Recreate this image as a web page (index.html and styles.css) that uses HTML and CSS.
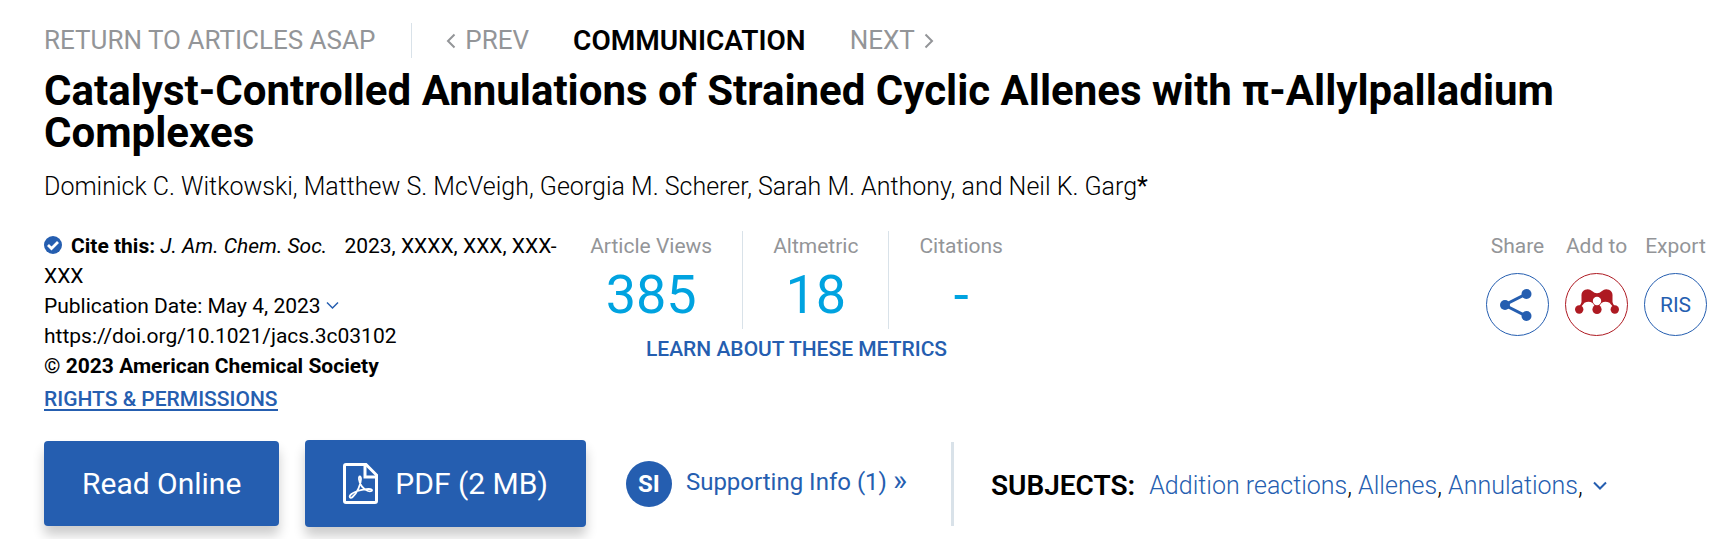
FILE: index.html
```html
<!DOCTYPE html>
<html lang="en">
<head>
<meta charset="utf-8">
<title>Catalyst-Controlled Annulations of Strained Cyclic Allenes</title>
<link rel="stylesheet" href="styles.css">
</head>
<body>
<main class="article">
  <nav class="crumbs">
    <a class="crumb-return" href="#">RETURN TO ARTICLES ASAP</a>
    <a class="crumb-step" href="#"><svg width="10" height="16" viewBox="0 0 10 16"><path d="M8.500 1.500 2 8l6.500 6.500"/></svg>PREV</a>
    <span class="crumb-type">COMMUNICATION</span>
    <a class="crumb-step" href="#">NEXT<svg width="10" height="16" viewBox="0 0 10 16"><path d="M1.500 1.500 8 8l-6.500 6.500"/></svg></a>
  </nav>
  <h1 class="title">Catalyst-Controlled Annulations of Strained Cyclic Allenes with π-Allylpalladium Complexes</h1>
  <p class="authors">Dominick C. Witkowski, Matthew S. McVeigh, Georgia M. Scherer, Sarah M. Anthony, and Neil K. Garg<span class="star">*</span></p>

  <div class="details">
    <div class="cite">
      <p class="cite-line"><svg class="check" width="18" height="18" viewBox="0 0 18 18"><circle cx="9" cy="9" r="9" fill="#255eb0"/><path d="m4 9 3.500 3.500L14 6" fill="none" stroke="#fff" stroke-width="2.800"/></svg><strong>Cite this:</strong> <em>J. Am. Chem. Soc.</em> <span class="cite-ref">2023, XXXX, XXX, XXX-<wbr>XXX</span></p>
      <p class="cite-line">Publication Date: May 4, 2023 <svg class="caret" width="13" height="9" viewBox="0 0 13 9"><path d="m1 1.500 5.500 5.500L12 1.500"/></svg></p>
      <p class="cite-line">https://doi.org/10.1021/jacs.3c03102</p>
      <p class="cite-line"><strong>© 2023 American Chemical Society</strong></p>
      <a class="rights" href="#">RIGHTS &amp; PERMISSIONS</a>
    </div>
    <div class="metrics">
      <dl class="metric-row">
        <div class="metric"><dt>Article Views</dt><dd>385</dd></div>
        <div class="metric"><dt>Altmetric</dt><dd>18</dd></div>
        <div class="metric"><dt>Citations</dt><dd>-</dd></div>
      </dl>
      <a class="learn" href="#">LEARN ABOUT THESE METRICS</a>
    </div>
    <div class="tools">
      <div class="tool"><span id="share">Share</span>
        <button class="round" type="button" aria-labelledby="share"><svg width="36" height="34" viewBox="0 0 36 34" fill="#255eb0"><path d="M26 6 4.500 17 26 28" fill="none" stroke="#255eb0" stroke-width="3"/><circle cx="5" cy="17" r="5"/><circle cx="26.500" cy="6" r="5"/><circle cx="26.500" cy="28" r="5"/></svg></button></div>
      <div class="tool"><span id="addto">Add to</span>
        <button class="round round-red" type="button" aria-labelledby="addto"><svg width="44" height="32" viewBox="0 0 44 32"><g fill="#ae1a22"><path d="M6.500 7A6.200 6.200 0 0 1 17 2q5 4.500 10 0a6.200 6.200 0 0 1 10.500 5v6q.3 2.200 2.500 4.500l-1.500 1q-3-3.500-4-4.700-4.500-2.200-8 .2-1.500 1.500-2.500 4h-4q-1-2.500-2.500-4-3.500-2.400-8-.2l-4 4.700-1.500-1q2.200-2.300 2.500-4.500z"/><circle cx="4.200" cy="20.500" r="4.200"/><circle cx="22" cy="20.500" r="4.600"/><circle cx="39.800" cy="20.500" r="4.200"/></g><circle cx="22" cy="12" r="4.200" fill="#fff"/></svg></button></div>
      <div class="tool"><span id="export">Export</span>
        <button class="round" type="button" aria-describedby="export">RIS</button></div>
    </div>
  </div>

  <div class="actions">
    <button class="btn" type="button">Read Online</button>
    <button class="btn btn-pdf" type="button"><svg width="35" height="41" viewBox="0 0 35 41" fill="none" stroke="#fff"><path d="M3 1.500h20L33.500 12v26q0 1.500-1.500 1.500H3q-1.500 0-1.500-1.500V3Q1.500 1.500 3 1.500z" stroke-width="3"/><path d="M22 2v12h11" stroke-width="3"/><path d="M7 34.500c-1.500-2 3-5 7.500-6.500 6-2 12.500-2.500 14-1.500s-.5 2.500-3.500 1.500c-5-1.500-8.500-7-9-11.500-.4-4 2-4 2-.5 0 5-4 14-8 17.500-1.200 1.200-2.300 1.800-3 1z" stroke-width="1.800"/></svg>PDF (2 MB)</button>
    <a class="support" href="#"><span class="si">SI</span><span class="support-text">Supporting Info (1) <span class="angle">»</span></span></a>
    <div class="subjects"><strong class="subjects-head">SUBJECTS:</strong>
      <ul class="subject-list"><li><a href="#">Addition reactions</a>,</li><li><a href="#">Allenes</a>,</li><li><a href="#">Annulations</a>,</li></ul>
      <button class="more" type="button" aria-label="More subjects"><svg class="caret caret-bold" width="14" height="10" viewBox="0 0 14 10"><path d="m1 1.500 6 6 6-6"/></svg></button>
    </div>
  </div>
</main>
</body>
</html>
```
FILE: styles.css
```css
* { box-sizing: border-box; margin: 0; padding: 0; }
body { background: #fff; color: #000; font: 400 21px/30px Roboto, sans-serif; }
a { color: #255eb0; text-decoration: none; }
button { font: inherit; cursor: pointer; }
strong { font-weight: 700; }
.article { padding: 23px 26px 13px 44px; }

.crumbs { display: flex; align-items: center; font-size: 26px; line-height: 35px; }
.crumbs a { color: #939598; }
.crumb-return { padding-right: 36px; border-right: 1px solid #d9e2e9; }
.crumb-step { display: flex; align-items: center; gap: 9px; }
.crumb-step svg { fill: none; stroke: #939598; stroke-width: 2; }
.crumb-return + .crumb-step { margin-left: 34px; }
.crumb-type { margin: 0 44px; font-size: 28px; font-weight: 600; }

.title { margin-top: 12px; font-size: 42px; line-height: 42px; font-weight: 700; }
.authors { margin-top: 16px; font-size: 25px; line-height: 34px; font-weight: 300; }
.star { font-weight: 400; }

.details { display: flex; margin-top: 27px; }
.cite { flex: 0 0 32%; padding-right: 5px; }
.check { margin-right: 9px; vertical-align: -1px; }
.cite-ref { margin-left: 12px; }
.caret { fill: none; stroke: #255eb0; stroke-width: 1.5; vertical-align: 3px; }
.caret-bold { stroke-width: 2; }
.rights { display: inline-block; margin-top: 8px; line-height: 20px; font-weight: 500; border-bottom: 2px solid #255eb0; }

.metrics { display: flex; flex-direction: column; align-items: center; margin-left: 14px; }
.metric-row { display: flex; }
.metric { padding: 0 30px; text-align: center; border-right: 1px solid #d9e2e9; }
.metric:first-child { padding-left: 0; }
.metric:last-child { padding-right: 0; border-right: 0; }
.metric dt, .tool { color: #939598; }
.metric dd { height: 68px; font-size: 54px; line-height: 68px; color: #00a3e0; }
.learn { margin-top: 5px; font-weight: 500; }

.tools { display: flex; gap: 16px; margin-left: auto; }
.tool { display: flex; flex-direction: column; align-items: center; gap: 12px; }
.round { display: flex; align-items: center; justify-content: center; width: 63px; height: 63px; border: 1px solid #255eb0; border-radius: 50%; background: #fff; color: #255eb0; }
.round-red { border-color: #ae1a22; }

.actions { display: flex; align-items: center; margin-top: 26px; }
.btn { display: flex; align-items: center; justify-content: center; gap: 17px; padding: 0 38px; height: 85px; border: 0; border-radius: 4px; background: #255eb0; color: #fff; font-size: 30px; box-shadow: 0 9px 12px rgba(0, 0, 0, .2); }
.btn-pdf { height: 87px; margin-left: 26px; }
.support { display: flex; align-items: center; gap: 14px; height: 84px; margin-left: 40px; padding-right: 44px; font-size: 24px; border-right: 3px solid #d9e2e9; }
.support-text { line-height: 30px; padding-bottom: 3px; }
.angle { font-size: 30px; line-height: 24px; }
.si { width: 46px; border-radius: 50%; background: #255eb0; color: #fff; font-size: 24px; line-height: 46px; font-weight: 700; text-align: center; }
.subjects { display: flex; align-items: center; margin-left: 37px; padding-top: 5px; font-size: 25px; line-height: 36px; }
.subjects-head { font-size: 28px; font-weight: 600; }
.subject-list { display: flex; gap: 6px; margin-left: 14px; list-style: none; font-weight: 300; }
.more { display: flex; margin-left: 10px; border: 0; background: none; }
```
